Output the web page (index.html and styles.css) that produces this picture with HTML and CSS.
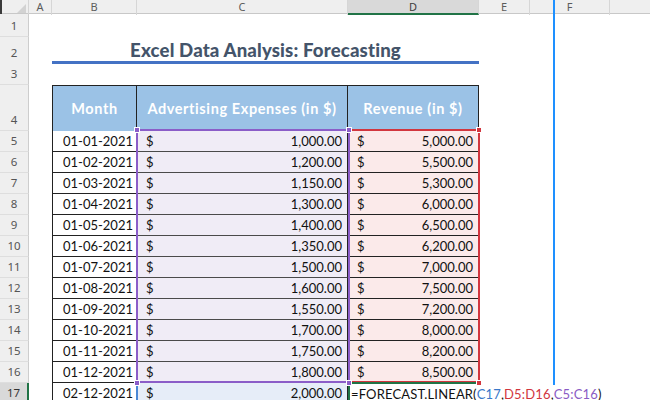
FILE: index.html
```html
<!DOCTYPE html>
<html>
<head>
<meta charset="utf-8">
<link rel="stylesheet" href="styles.css">
</head>
<body>
<div class="sheet">
  <div class="grid colheads">
    <div class="corner"><span class="tri"></span></div>
    <div class="ch">A</div>
    <div class="ch">B</div>
    <div class="ch">C</div>
    <div class="ch sel">D</div>
    <div class="ch">E</div>
    <div class="ch">F</div>
    <div class="ch"></div>
  </div>

  <div class="grid row h23"><div class="rh">1</div></div>
  <div class="grid row h25"><div class="rh">2</div><div class="title">Excel Data Analysis: Forecasting</div></div>
  <div class="grid row h23"><div class="rh">3</div></div>
  <div class="grid row h46">
    <div class="rh">4</div>
    <div class="b th first">Month</div>
    <div class="th">Advertising Expenses (in $)</div>
    <div class="th">Revenue (in $)</div>
  </div>

  <div class="grid row h21"><div class="rh">5</div><div class="b td first date">01-01-2021</div><div class="td acct cfill"><span>$</span><span>1,000.00</span></div><div class="td acct dfill"><span>$</span><span>5,000.00</span></div></div>
  <div class="grid row h21"><div class="rh">6</div><div class="b td first date">01-02-2021</div><div class="td acct cfill"><span>$</span><span>1,200.00</span></div><div class="td acct dfill"><span>$</span><span>5,500.00</span></div></div>
  <div class="grid row h21"><div class="rh">7</div><div class="b td first date">01-03-2021</div><div class="td acct cfill"><span>$</span><span>1,150.00</span></div><div class="td acct dfill"><span>$</span><span>5,300.00</span></div></div>
  <div class="grid row h21"><div class="rh">8</div><div class="b td first date">01-04-2021</div><div class="td acct cfill"><span>$</span><span>1,300.00</span></div><div class="td acct dfill"><span>$</span><span>6,000.00</span></div></div>
  <div class="grid row h21"><div class="rh">9</div><div class="b td first date">01-05-2021</div><div class="td acct cfill"><span>$</span><span>1,400.00</span></div><div class="td acct dfill"><span>$</span><span>6,500.00</span></div></div>
  <div class="grid row h21"><div class="rh">10</div><div class="b td first date">01-06-2021</div><div class="td acct cfill"><span>$</span><span>1,350.00</span></div><div class="td acct dfill"><span>$</span><span>6,200.00</span></div></div>
  <div class="grid row h21"><div class="rh">11</div><div class="b td first date">01-07-2021</div><div class="td acct cfill"><span>$</span><span>1,500.00</span></div><div class="td acct dfill"><span>$</span><span>7,000.00</span></div></div>
  <div class="grid row h21"><div class="rh">12</div><div class="b td first date">01-08-2021</div><div class="td acct cfill"><span>$</span><span>1,600.00</span></div><div class="td acct dfill"><span>$</span><span>7,500.00</span></div></div>
  <div class="grid row h21"><div class="rh">13</div><div class="b td first date">01-09-2021</div><div class="td acct cfill"><span>$</span><span>1,550.00</span></div><div class="td acct dfill"><span>$</span><span>7,200.00</span></div></div>
  <div class="grid row h21"><div class="rh">14</div><div class="b td first date">01-10-2021</div><div class="td acct cfill"><span>$</span><span>1,700.00</span></div><div class="td acct dfill"><span>$</span><span>8,000.00</span></div></div>
  <div class="grid row h21"><div class="rh">15</div><div class="b td first date">01-11-2021</div><div class="td acct cfill"><span>$</span><span>1,750.00</span></div><div class="td acct dfill"><span>$</span><span>8,200.00</span></div></div>
  <div class="grid row h21"><div class="rh">16</div><div class="b td first date">01-12-2021</div><div class="td acct cfill"><span>$</span><span>1,800.00</span></div><div class="td acct dfill"><span>$</span><span>8,500.00</span></div></div>
  <div class="grid row h21">
    <div class="rh rsel">17</div>
    <div class="b td first date">02-12-2021</div>
    <div class="td acct c17"><span>$</span><span>2,000.00</span></div>
    <div class="td formula">=FORECAST.LINEAR(<span class="ref-blue">C17</span>,<span class="ref-red">D5:D16</span>,<span class="ref-purple">C5:C16</span>)</div>
  </div>

  <div class="range red-range"></div>
  <div class="range purple-range"></div>
  <div class="range blue-range"></div>
  <div class="active-top"></div>
  <div class="active-left"></div>
  <div class="handle ph1"></div>
  <div class="handle ph2"></div>
  <div class="handle ph3"></div>
  <div class="handle ph4"></div>
  <div class="handle rh1"></div>
  <div class="handle rh2"></div>
  <div class="split"></div>
</div>
</body>
</html>
```

FILE: styles.css
```css
* { box-sizing: border-box; margin: 0; padding: 0; }
html, body { width: 650px; height: 400px; overflow: hidden; background: #fff; }
body { font-family: Lato, "Liberation Sans", sans-serif; color: #111; }

.sheet { position: relative; width: 650px; height: 400px; overflow: hidden; background: #fff; }

.grid {
  display: grid;
  grid-template-columns: 29px 23px 85px 211px 131px 51px 80px 41px;
}

/* column headers */
.colheads { height: 14px; background: #efefef; border-bottom: 1px solid #c8c8c8; }
.corner { display: flex; justify-content: flex-end; align-items: flex-end; padding: 0 2px 2px 0; border-right: 1px solid #d4d4d4; border-left: 2px solid #3a3a3a; }
.tri { width: 0; height: 0; border-left: 9px solid transparent; border-bottom: 9px solid #d2d2d2; }
.ch {
  border-right: 1px solid #d6d6d6;
  font-family: "Noto Sans", sans-serif; font-size: 11px; line-height: 13px;
  color: #5c5c5c; text-align: center;
}
.ch.sel { background: #d9d9d9; border-bottom: 2px solid #217346; color: #3d3d3d; }

/* rows */
.row { position: relative; }
.h21 { height: 21px; }
.h23 { height: 23px; }
.h25 { height: 25px; }
.h46 { height: 46px; }

.rh {
  grid-column: 1;
  background: #efefef;
  border-right: 1px solid #cdcdcd;
  border-bottom: 1px solid #dedede;
  display: flex; align-items: flex-end; justify-content: center;
  padding-bottom: 4px;
  font-family: "Noto Sans", sans-serif; font-size: 11.5px; line-height: 12px; color: #555;
}
.rh.rsel { background: #d9d9d9; border-right: 2px solid #217346; color: #333; }

.title {
  grid-column: 3 / 6;
  border-bottom: 3px solid #4472c4;
  display: flex; align-items: center; justify-content: center;
  padding-top: 2px;
  font-weight: 900; font-size: 18.6px; letter-spacing: 0.15px; color: #44546a;
}

.b { grid-column: 3; }
.first { border-left: 1px solid #222; }

.th {
  background: #9bc2e6;
  color: #fff; font-weight: bold; font-size: 14.5px; letter-spacing: 0.6px;
  border-top: 1px solid #222; border-right: 1px solid #222;
  display: flex; align-items: center; justify-content: center;
}

.td {
  border-right: 1px solid #222; border-bottom: 1px solid #222;
  font-size: 13px; color: #111;
  display: flex; align-items: center;
}
.date { justify-content: flex-end; padding-right: 3px; }
.acct { justify-content: space-between; padding: 0 5px 0 9px; }
.cfill { background: #f0ecf6; border-bottom-color: #4a4a4a; }
.dfill { background: #fbeaea; }
.c17 { background: #e6edf8; }

.formula { white-space: nowrap; overflow: visible; padding-left: 3px; letter-spacing: 0.15px; border-right: none; border-bottom: none; }
.ref-blue { color: #3a78c9; }
.ref-red { color: #d1353d; }
.ref-purple { color: #8a5bc4; }

/* reference range highlights drawn over the cells */
.range { position: absolute; border: 2px solid; }
.purple-range { left: 136px; top: 129px; width: 214px; height: 254px; border-color: #8b5dc8; }
.red-range { left: 348px; top: 129px; width: 132px; height: 254px; border-color: #d2363f; }
.blue-range { left: 136px; top: 383px; width: 214px; height: 24px; border-color: #4a88d6; border-top: none; }
.active-top { position: absolute; left: 350px; top: 382px; width: 127px; height: 2px; background: #217346; }
.active-left { position: absolute; left: 348px; top: 383px; width: 2px; height: 20px; background: #217346; }

.handle { position: absolute; width: 6px; height: 6px; border: 1px solid #fff; }
.ph1 { left: 134px; top: 127px; background: #8b5dc8; }
.ph2 { left: 346px; top: 127px; background: #8b5dc8; }
.ph3 { left: 134px; top: 380px; background: #8b5dc8; }
.ph4 { left: 346px; top: 380px; background: #8b5dc8; }
.rh1 { left: 476px; top: 127px; background: #d2363f; }
.rh2 { left: 476px; top: 380px; background: #d2363f; }

.split { position: absolute; left: 553px; top: 0; width: 2px; height: 385px; background: #1e90ff; }
```
